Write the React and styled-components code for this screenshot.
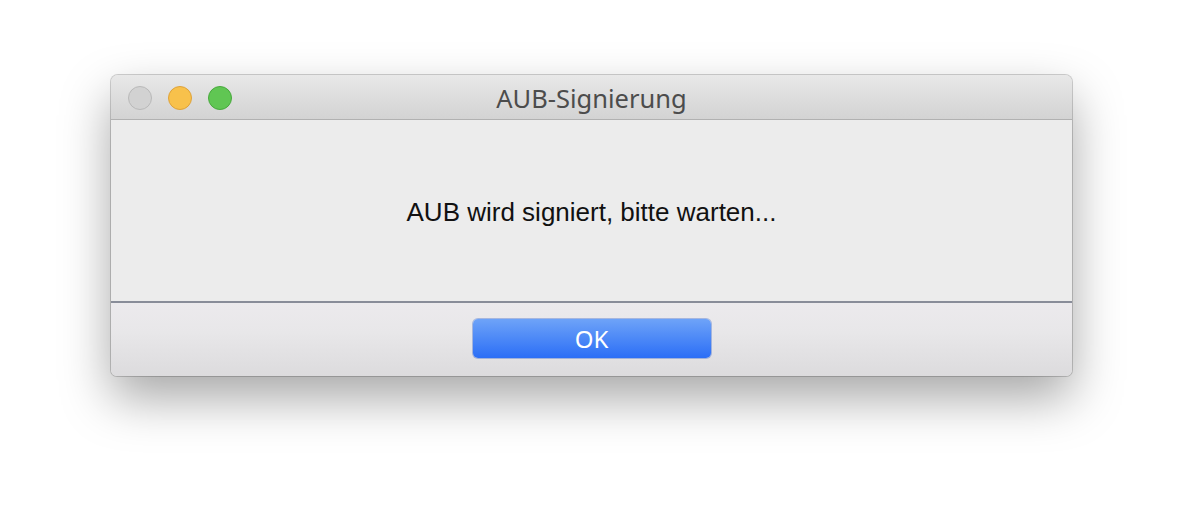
import React from 'react'
import styled, { createGlobalStyle } from 'styled-components'

const GlobalStyle = createGlobalStyle`
  html, body {
    margin: 0;
    padding: 0;
    background: #ffffff;
  }
  body {
    font-family: 'Liberation Sans', Arial, sans-serif;
  }
`

const Page = styled.div`
  width: 1184px;
  height: 524px;
  box-sizing: border-box;
  padding: 75px 0 0 111px;
  overflow: hidden;
`

const Window = styled.div`
  width: 961px;
  height: 301px;
  display: flex;
  flex-direction: column;
  border-radius: 7px 7px 6px 6px;
  overflow: hidden;
  box-shadow: 0 0 0 1px rgba(0, 0, 0, 0.18), 0 22px 50px rgba(0, 0, 0, 0.35);
  background: #ececec;
`

const TitleBar = styled.div`
  position: relative;
  height: 44px;
  flex: none;
  display: flex;
  align-items: center;
  justify-content: center;
  background: linear-gradient(#e8e8e8, #d3d3d3);
  border-bottom: 1px solid #b1b1b1;
`

const Lights = styled.div`
  position: absolute;
  left: 17px;
  top: 11px;
  display: flex;
  gap: 16px;
`

const Light = styled.span`
  width: 22px;
  height: 22px;
  border-radius: 50%;
  background: ${(p) => p.$fill};
  border: 1px solid ${(p) => p.$edge};
`

const Title = styled.div`
  font-family: 'Noto Sans', 'Liberation Sans', sans-serif;
  font-size: 25.5px;
  color: #4c4c4c;
  padding-top: 2px;
`

const Body = styled.div`
  flex: 1;
  display: flex;
  align-items: center;
  justify-content: center;
  background: #ececec;
  border-bottom: 2px solid #898d99;
`

const Message = styled.div`
  font-family: 'Liberation Sans', Arial, sans-serif;
  font-size: 26px;
  color: #111111;
  padding-top: 4px;
`

const Footer = styled.div`
  height: 73px;
  flex: none;
  display: flex;
  justify-content: center;
  padding-top: 16px;
  box-sizing: border-box;
  background: linear-gradient(#eceaed, #e8e7e9 40%, #dcdbdd);
`

const Button = styled.button`
  width: 238px;
  height: 39px;
  border: none;
  border-radius: 5px;
  background: linear-gradient(#6ea3f8, #2b6ef6);
  box-shadow: 0 0 0 1px rgba(40, 90, 200, 0.35);
  color: #ffffff;
  font-family: 'Noto Sans', 'Liberation Sans', sans-serif;
  font-size: 24px;
  line-height: 39px;
  padding: 0;
  cursor: pointer;
`

export default function App() {
  return (
    <>
      <GlobalStyle />
      <Page>
        <Window>
          <TitleBar>
            <Lights>
              <Light $fill='#d2d2d2' $edge='#b9b9b9' />
              <Light $fill='#f8c14b' $edge='#dea23a' />
              <Light $fill='#60c653' $edge='#48a93d' />
            </Lights>
            <Title>AUB-Signierung</Title>
          </TitleBar>
          <Body>
            <Message>AUB wird signiert, bitte warten...</Message>
          </Body>
          <Footer>
            <Button>OK</Button>
          </Footer>
        </Window>
      </Page>
    </>
  )
}
